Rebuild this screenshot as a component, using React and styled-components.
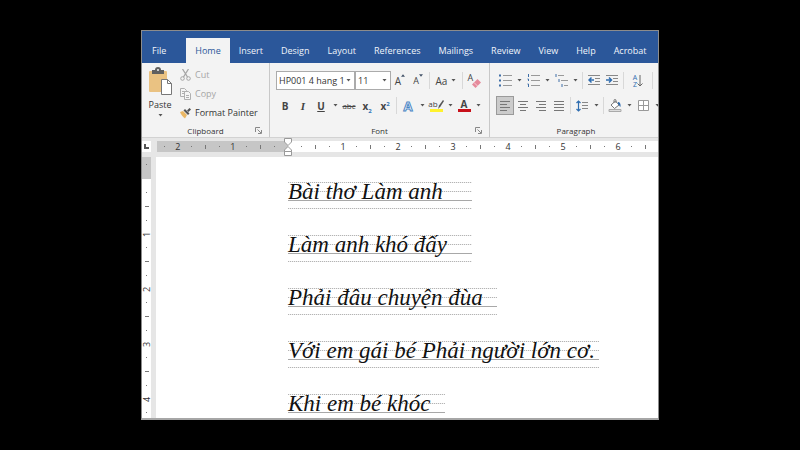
import React, { useState } from "react"
import styled, { createGlobalStyle, css } from "styled-components"

const GlobalStyle = createGlobalStyle`
  * {
    box-sizing: border-box;
  }
  body {
    margin: 0;
    background: #000;
    font-family: "Open Sans", "Noto Sans", sans-serif;
    font-size: 9px;
    color: #333;
  }
  button, select {
    font: inherit;
    color: inherit;
    margin: 0;
    padding: 0;
    border: 0;
    background: none;
  }
`

const Page = styled.div`
  height: 100vh;
  padding: 30px 141px;
  display: flex;
`
const Window = styled.main`
  flex: 1;
  min-width: 0;
  display: flex;
  flex-direction: column;
  overflow: hidden;
  background: #e6e6e6;
  border: 1px solid #8c8c8c;
  border-bottom: 2px solid #a6a6a6;
`

/* tabs */
const Tabs = styled.nav`
  flex: none;
  display: flex;
  align-items: flex-end;
  height: 32px;
  padding-left: 1px;
  background: #2b579a;
`
const Tab = styled.button`
  flex: none;
  height: 25px;
  padding: 0 9px;
  color: ${(prop) => (prop.$active ? "#2b579a" : "#f0f4fa")};
  background: ${(prop) => (prop.$active ? "#f3f3f3" : "transparent")};

  &:first-child {
    margin-right: 11px;
  }
`

/* ribbon */
const Ribbon = styled.section`
  flex: none;
  display: flex;
  height: 75px;
  background: #f3f3f3;
  border-bottom: 1px solid #d2d2d2;
`
const Group = styled.div`
  flex: none;
  width: ${(prop) => prop.$width}px;
  display: flex;
  flex-direction: column;
  padding: 2px 4px 0 6px;
  border-right: 1px solid #c8c8c8;
`
const GroupBody = styled.div`
  height: 58px;
  padding-top: 6px;
  display: flex;
  flex-direction: column;
  gap: 6px;
`
const GroupFooter = styled.div`
  display: grid;
  grid-template-columns: 10px 1fr 10px;
  align-items: center;
  height: 14px;
  margin-left: -2px;
  font-size: 8px;
  text-align: center;
`
const GroupName = styled.span`
  grid-column: 2;
`
const Row = styled.div`
  display: flex;
  align-items: center;
  height: 19px;
`
const Separator = styled.span`
  flex: none;
  width: 1px;
  height: 17px;
  margin: 0 2px;
  background: #d8d8d8;
`
const Tool = styled.button`
  flex: none;
  width: ${(prop) => prop.$width || 18}px;
  height: 19px;
  display: flex;
  align-items: center;
  justify-content: center;
  gap: 4px;

  ${(prop) =>
    prop.$active &&
    css`
      background: #cbcbcb;
      border: 1px solid #9a9a9a;
    `}
`
const ArrowButton = styled(Tool)`
  width: 10px;
`
const Letter = styled.span`
  font-size: ${(prop) => prop.$size || 10}px;
  font-weight: ${(prop) => (prop.$bold ? 700 : 400)};
  color: #444;

  sub,
  sup {
    font-size: 6px;
    line-height: 0;
    color: #2e75b6;
  }
`
const Italic = styled(Letter)`
  font-family: "Liberation Serif", serif;
  font-style: italic;
`
const Underlined = styled(Letter)`
  text-decoration: underline;
`
const Strike = styled(Letter)`
  text-decoration: line-through;
`

/* clipboard */
const Clipboard = styled.div`
  display: flex;
  height: 58px;
`
const PasteButton = styled.button`
  width: 24px;
  display: flex;
  flex-direction: column;
  align-items: center;
  justify-content: space-between;
  padding: 2px 0 6px;
`
const ClipboardList = styled.div`
  display: flex;
  flex-direction: column;
  margin-left: 8px;
`
const ClipboardItem = styled.button`
  display: flex;
  align-items: center;
  gap: 4px;
  height: 19px;
  color: #333;

  &:disabled {
    color: #a6a6a6;
  }
`

/* drop-downs */
const Field = styled.label`
  flex: none;
  display: grid;
  width: ${(prop) => prop.$width}px;
  align-items: center;

  & > * {
    grid-area: 1 / 1;
  }
  & > svg {
    justify-self: end;
    margin-right: 4px;
    pointer-events: none;
  }
`
const Select = styled.select`
  appearance: none;
  width: 100%;
  height: 19px;
  padding-left: 2px;
  background: #fff;
  border: 1px solid #ababab;
  border-radius: 0;
`

/* rulers */
const RulerBar = styled.div`
  flex: none;
  display: flex;
  height: 19px;
  padding: 3px 0 5px;
`
const Corner = styled.button`
  flex: none;
  width: 9px;
  height: 11px;
  margin-right: 6px;
  display: flex;
  align-items: center;
  justify-content: center;
  background: #fff;
`
const Track = styled.div`
  position: relative;
  display: flex;
  flex: ${(prop) => (prop.$margin ? "none" : 1)};
  width: ${(prop) => (prop.$margin ? "131px" : "auto")};
  min-width: 0;
  justify-content: ${(prop) => (prop.$margin ? "flex-end" : "flex-start")};
  padding: 0 7px;
  background: ${(prop) => (prop.$margin ? "#c6c6c6" : "#fff")};
`
const Clip = styled.div`
  flex: 1;
  min-width: 0;
  display: flex;
  justify-content: inherit;
  overflow: hidden;
`
const Inch = styled.div`
  flex: none;
  width: 55px;
  display: grid;
  grid-template-columns: repeat(4, 1fr);
  place-items: center;
  font-size: 9px;
  line-height: 11px;
`
const Dot = styled.i`
  width: 1px;
  height: 1px;
  background: #777;
`
const Tick = styled.i`
  width: 1px;
  height: 4px;
  background: #777;
`
const IndentMarker = styled.svg`
  position: absolute;
  left: -4px;
  top: -3px;
`
const Body = styled.div`
  flex: 1;
  min-height: 0;
  display: flex;
`
const SideRuler = styled.div`
  flex: none;
  width: 9px;
  margin-right: 5px;
  overflow: hidden;
  background: #fff;
`
const SideMargin = styled.div`
  height: 22px;
  padding-top: 7px;
  margin-bottom: 7px;
  display: flex;
  justify-content: center;
  background: #c6c6c6;
`
const SideInch = styled.div`
  height: 55px;
  display: grid;
  grid-template-rows: repeat(4, 1fr);
  place-items: center;
  font-size: 9px;
  line-height: 9px;
`
const SideTick = styled(Tick)`
  width: 4px;
  height: 1px;
`
const SideNumber = styled.span`
  transform: rotate(-90deg);
`

/* document */
const Sheet = styled.article`
  flex: 1;
  min-width: 0;
  overflow: hidden;
  display: flex;
  flex-direction: column;
  align-items: flex-start;
  gap: 26px;
  padding: 25px 0 0 132px;
  background: #fff;
`
const dotted = "repeating-linear-gradient(90deg, #b4b4b4 0 1px, #eee 1px 2px)"
const Verse = styled.p`
  flex: none;
  margin: 0;
  height: 27px;
  width: ${(prop) => prop.$width}px;
  font-family: "Liberation Serif", serif;
  font-size: 23px;
  font-style: italic;
  line-height: 20px;
  white-space: nowrap;
  color: #111;
  background:
    ${dotted} 0 0 / 100% 1px no-repeat,
    ${dotted} 0 9px / 100% 1px no-repeat,
    linear-gradient(#a8a8a8, #a8a8a8) 0 18px / 100% 1px no-repeat,
    ${dotted} 0 26px / 100% 1px no-repeat;
`

const tabs = [
  "File",
  "Home",
  "Insert",
  "Design",
  "Layout",
  "References",
  "Mailings",
  "Review",
  "View",
  "Help",
  "Acrobat",
]

const verses = [
  { text: "Bài thơ Làm anh", width: 184 },
  { text: "Làm anh khó đấy", width: 184 },
  { text: "Phải đâu chuyện đùa", width: 209 },
  { text: "Với em gái bé Phải người lớn cơ.", width: 311 },
  { text: "Khi em bé khóc", width: 157 },
]

const Caret = () => (
  <svg width="5" height="3" viewBox="0 0 5 3">
    <path d="M.5 0h4l-2 2.500z" fill="#555" />
  </svg>
)

const Arrow = ({ label }) => (
  <ArrowButton aria-label={label}>
    <Caret />
  </ArrowButton>
)

const Launcher = () => (
  <svg width="7" height="7" viewBox="0 0 7 7" fill="none" stroke="#888">
    <path d="M.5 5V.5H5M2.500 2.500l3.500 3.500M6.500 3v3.500H3" />
  </svg>
)

const PasteIcon = () => (
  <svg width="25" height="28" viewBox="0 0 25 28">
    <rect x="1" y="4" width="18" height="21" rx="1" fill="#eac282" />
    <path d="M4 3h3a3 3 0 0 1 6 0h3v4H4z" fill="#606060" />
    <circle cx="10" cy="3" r="1" fill="#f3f3f3" />
    <path d="M13.500 12.500h6l4 4v11h-10z" fill="#fff" stroke="#777" />
    <path d="M19.500 12.500v4h4" fill="none" stroke="#777" />
  </svg>
)

const CutIcon = () => (
  <svg width="11" height="12" viewBox="0 0 11 12" fill="none" stroke="#a6a6a6">
    <path d="M2.500 0l5 8M8.500 0l-5 8" strokeWidth="1.300" />
    <circle cx="2.500" cy="9.500" r="1.800" />
    <circle cx="8.500" cy="9.500" r="1.800" />
  </svg>
)

const CopyIcon = () => (
  <svg width="11" height="12" viewBox="0 0 11 12" fill="#f6f6f6" stroke="#b0b0b0">
    <path d="M.5.5h4l2 2v6h-6zM2 3.500h3M2 5.500h3" />
    <path d="M4.500 3.500h4l2 2v6h-6zM6 7.500h3M6 9.500h3" />
  </svg>
)

const BrushIcon = () => (
  <svg width="11" height="12" viewBox="0 0 11 12">
    <path d="M0 5l3-1 4 4-2 3.500C3 10 1 8 0 5z" fill="#eab765" />
    <path d="M3.500 3.500l1.500-1.500 4.500 4.500L8 8z" fill="#555" />
    <path d="M7 3.500L9.500 1 11 2.500 8.500 5z" fill="#555" />
  </svg>
)

const FontSizeIcon = ({ up }) => (
  <svg width="4" height="3" viewBox="0 0 5 3">
    <path d={up ? "M0 3h5L2.500 0z" : "M0 0h5L2.500 3z"} fill="#44546a" />
  </svg>
)

const Superscripted = styled.span`
  display: flex;
  align-items: flex-start;
`

const EraserIcon = () => (
  <svg width="9" height="9" viewBox="0 0 9 9">
    <path d="M0 5.500L5.500 0 9 3.500 3.500 9z" fill="#e58a9b" />
    <path d="M2 3.500L5.500 7" stroke="#f6cdd5" />
  </svg>
)

const EraserStack = styled.span`
  display: grid;
  grid-template-columns: 4px 9px;
  align-items: end;
  height: 14px;
  line-height: 8px;

  & > span {
    align-self: start;
  }
`

const ColorStack = styled.span`
  display: flex;
  flex-direction: column;
  align-items: center;
  width: 13px;
  line-height: 10px;
  border-bottom: 3px solid ${(prop) => prop.$color};
`

const HighlightMark = styled.span`
  display: flex;
  align-items: center;
`

const PenIcon = () => (
  <svg width="6" height="9" viewBox="0 0 6 9">
    <path d="M0 9l1-3.500L5 0l1 1-3.500 5.500z" fill="#555" />
  </svg>
)

const TextEffect = styled.span`
  font-size: 13px;
  font-weight: 700;
  line-height: 14px;
  color: #fff;
  -webkit-text-stroke: 1px #4a86c5;
`

const ListIcon = ({ kind }) => (
  <svg width="13" height="13" viewBox="0 0 13 13" fill="none">
    {kind === "bullets" && (
      <>
        <path d="M0 1.500h2M0 6.500h2M0 11.500h2" stroke="#3f6fa8" strokeWidth="2" />
        <path d="M4 1.500h9M4 6.500h9M4 11.500h9" stroke="#999" />
      </>
    )}
    {kind === "numbers" && (
      <>
        <path d="M1.500 0v3M.5 5h1v2M.5 10h1v3" stroke="#3f6fa8" />
        <path d="M4 1.500h9M4 6.500h9M4 11.500h9" stroke="#999" />
      </>
    )}
    {kind === "levels" && (
      <>
        <path d="M1 0v3M4 5v3M7 10v3" stroke="#3f6fa8" />
        <path d="M3 1.500h6M6 6.500h7M9 11.500h4" stroke="#999" />
      </>
    )}
  </svg>
)

const IndentIcon = ({ right }) => (
  <svg width="12" height="11" viewBox="0 0 12 11" fill="none">
    <path d="M0 .5h12M7 3.500h5M7 6.500h5M0 9.500h12" stroke="#888" />
    <path
      d={right ? "M0 5h5M3 2.500L5.500 5 3 7.500" : "M6 5H1M3.500 2.500L1 5l2.500 2.500"}
      stroke="#2f6db0"
      strokeWidth="1.500"
    />
  </svg>
)

const SortMark = styled.span`
  display: flex;
  align-items: center;
  font-size: 7px;
  line-height: 7px;
  color: #2f6db0;
`
const SortLetters = styled.span`
  display: flex;
  flex-direction: column;
`

const DownIcon = () => (
  <svg width="6" height="12" viewBox="0 0 6 12" fill="none" stroke="#666">
    <path d="M3 0v11M.5 8.500L3 11l2.500-2.500" />
  </svg>
)

const alignPaths = {
  left: "M0 .5h10M0 3.500h7M0 6.500h10M0 9.500h7",
  center: "M0 .5h10M2 3.500h6M0 6.500h10M2 9.500h6",
  right: "M0 .5h10M3 3.500h7M0 6.500h10M3 9.500h7",
  justify: "M0 .5h10M0 3.500h10M0 6.500h10M0 9.500h10",
}

const AlignIcon = ({ align }) => (
  <svg width="10" height="10" viewBox="0 0 10 10" stroke="#777">
    <path d={alignPaths[align]} />
  </svg>
)

const SpacingIcon = () => (
  <svg width="12" height="12" viewBox="0 0 12 12" fill="none">
    <path d="M2.500 1v10M.5 3l2-2 2 2M.5 9l2 2 2-2" stroke="#2f6db0" strokeWidth="1.200" />
    <path d="M6 2.500h6M6 5.500h6M6 8.500h6" stroke="#888" />
  </svg>
)

const BucketIcon = () => (
  <svg width="14" height="13" viewBox="0 0 14 13" fill="none">
    <path d="M3 6l4.500-4L11 6 6.500 9.500z" fill="#fff" stroke="#777" />
    <path d="M6 4V1.500a1 1 0 0 1 2 0V4" stroke="#777" />
    <path d="M10 3c2 0 3 2 2.500 5-1.500-1-1-2-2.500-3z" fill="#2f6db0" />
    <path d="M1 10.500h12v2H1z" fill="#ddd" stroke="#aaa" />
  </svg>
)

const BordersIcon = () => (
  <svg width="11" height="11" viewBox="0 0 11 11" fill="#fff" stroke="#999">
    <path d="M.5.5h10v10H.5zM5.500.5v10M.5 5.500h10" />
  </svg>
)

const App = () => {
  const [activeTab, setActiveTab] = useState("Home")
  const [align, setAlign] = useState("left")

  return (
    <>
      <GlobalStyle />
      <Page>
        <Window>
          <Tabs>
            {tabs.map((name) => (
              <Tab
                key={name}
                $active={activeTab === name}
                onClick={() => setActiveTab(name)}
              >
                {name}
              </Tab>
            ))}
          </Tabs>

          <Ribbon>
            <Group $width={128}>
              <Clipboard>
                <PasteButton>
                  <PasteIcon />
                  Paste
                  <Caret />
                </PasteButton>
                <ClipboardList>
                  <ClipboardItem disabled>
                    <CutIcon />
                    Cut
                  </ClipboardItem>
                  <ClipboardItem disabled>
                    <CopyIcon />
                    Copy
                  </ClipboardItem>
                  <ClipboardItem>
                    <BrushIcon />
                    Format Painter
                  </ClipboardItem>
                </ClipboardList>
              </Clipboard>
              <GroupFooter>
                <GroupName>Clipboard</GroupName>
                <Launcher />
              </GroupFooter>
            </Group>

            <Group $width={220}>
              <GroupBody>
                <Row>
                  <Field $width={79}>
                    <Select aria-label="Font name">
                      <option>HP001 4 hang 1</option>
                    </Select>
                    <Caret />
                  </Field>
                  <Field $width={36}>
                    <Select aria-label="Font size">
                      <option>11</option>
                    </Select>
                    <Caret />
                  </Field>
                  <Tool aria-label="Increase font size">
                    <Superscripted>
                      <Letter>A</Letter>
                      <FontSizeIcon up />
                    </Superscripted>
                  </Tool>
                  <Tool aria-label="Decrease font size">
                    <Superscripted>
                      <Letter $size={9}>A</Letter>
                      <FontSizeIcon />
                    </Superscripted>
                  </Tool>
                  <Separator />
                  <Tool $width={28} aria-label="Change case">
                    <Letter>Aa</Letter>
                    <Caret />
                  </Tool>
                  <Separator />
                  <Tool aria-label="Clear formatting">
                    <EraserStack>
                      <Letter $size={9}>A</Letter>
                      <EraserIcon />
                    </EraserStack>
                  </Tool>
                </Row>
                <Row>
                  <Tool aria-label="Bold">
                    <Letter $bold>B</Letter>
                  </Tool>
                  <Tool aria-label="Italic">
                    <Italic $bold $size={11}>I</Italic>
                  </Tool>
                  <Tool aria-label="Underline">
                    <Underlined $bold>U</Underlined>
                  </Tool>
                  <Arrow label="Underline style" />
                  <Tool aria-label="Strikethrough">
                    <Strike $size={8}>abc</Strike>
                  </Tool>
                  <Tool aria-label="Subscript">
                    <Letter $bold>
                      x<sub>2</sub>
                    </Letter>
                  </Tool>
                  <Tool aria-label="Superscript">
                    <Letter $bold>
                      x<sup>2</sup>
                    </Letter>
                  </Tool>
                  <Separator />
                  <Tool aria-label="Text effects">
                    <TextEffect>A</TextEffect>
                  </Tool>
                  <Arrow label="More text effects" />
                  <Tool aria-label="Highlight">
                    <ColorStack $color="#fff22d">
                      <HighlightMark>
                        <Letter $size={8}>ab</Letter>
                        <PenIcon />
                      </HighlightMark>
                    </ColorStack>
                  </Tool>
                  <Arrow label="Highlight colour" />
                  <Tool aria-label="Font colour">
                    <ColorStack $color="#c8101a">
                      <Letter $bold>A</Letter>
                    </ColorStack>
                  </Tool>
                  <Arrow label="More font colours" />
                </Row>
              </GroupBody>
              <GroupFooter>
                <GroupName>Font</GroupName>
                <Launcher />
              </GroupFooter>
            </Group>

            <Group $width={173}>
              <GroupBody>
                <Row>
                  <Tool aria-label="Bullets">
                    <ListIcon kind="bullets" />
                  </Tool>
                  <Arrow label="Bullet style" />
                  <Tool aria-label="Numbering">
                    <ListIcon kind="numbers" />
                  </Tool>
                  <Arrow label="Number style" />
                  <Tool aria-label="Multilevel list">
                    <ListIcon kind="levels" />
                  </Tool>
                  <Arrow label="List style" />
                  <Separator />
                  <Tool aria-label="Decrease indent">
                    <IndentIcon />
                  </Tool>
                  <Tool aria-label="Increase indent">
                    <IndentIcon right />
                  </Tool>
                  <Separator />
                  <Tool $width={24} aria-label="Sort">
                    <SortMark>
                      <SortLetters>
                        <span>A</span>
                        <span>Z</span>
                      </SortLetters>
                      <DownIcon />
                    </SortMark>
                  </Tool>
                  <Separator />
                  <Tool aria-label="Show marks">
                    <Letter>¶</Letter>
                  </Tool>
                </Row>
                <Row>
                  {Object.keys(alignPaths).map((item) => (
                    <Tool
                      key={item}
                      aria-label={item}
                      $active={align === item}
                      onClick={() => setAlign(item)}
                    >
                      <AlignIcon align={item} />
                    </Tool>
                  ))}
                  <Separator />
                  <Tool aria-label="Line spacing">
                    <SpacingIcon />
                  </Tool>
                  <Arrow label="More line spacing" />
                  <Separator />
                  <Tool aria-label="Shading">
                    <BucketIcon />
                  </Tool>
                  <Arrow label="Shading colour" />
                  <Tool aria-label="Borders">
                    <BordersIcon />
                  </Tool>
                  <Arrow label="Border style" />
                </Row>
              </GroupBody>
              <GroupFooter>
                <GroupName>Paragraph</GroupName>
              </GroupFooter>
            </Group>
          </Ribbon>

          <RulerBar>
            <Corner aria-label="Tab stop">
              <svg width="5" height="5" viewBox="0 0 5 5">
                <path d="M1 0v4h4" fill="none" stroke="#555" strokeWidth="2" />
              </svg>
            </Corner>
            <Track $margin>
              <Clip>
                {["", 2, 1].map((n) => (
                  <Inch key={n}>
                    <span>{n}</span>
                    <Dot />
                    <Tick />
                    <Dot />
                  </Inch>
                ))}
              </Clip>
            </Track>
            <Track>
              <IndentMarker width="8" height="18" viewBox="0 0 8 18" fill="#fff" stroke="#999">
                <path d="M.5.5h7V4L4 7.500.5 4zM4 8.500L7.500 12v1.500h-7V12zM.5 13.500h7v4h-7z" />
              </IndentMarker>
              <Clip>
                {[1, 2, 3, 4, 5, 6, ""].map((n) => (
                  <Inch key={n}>
                    <Dot />
                    <Tick />
                    <Dot />
                    <span>{n}</span>
                  </Inch>
                ))}
              </Clip>
            </Track>
          </RulerBar>

          <Body>
            <SideRuler>
              <SideMargin>
                <Dot />
              </SideMargin>
              {[1, 2, 3, 4, ""].map((n) => (
                <SideInch key={n}>
                  <Dot />
                  <SideTick />
                  <Dot />
                  <SideNumber>{n}</SideNumber>
                </SideInch>
              ))}
            </SideRuler>
            <Sheet>
              {verses.map((item) => (
                <Verse key={item.text} $width={item.width}>
                  {item.text}
                </Verse>
              ))}
            </Sheet>
          </Body>
        </Window>
      </Page>
    </>
  )
}

export default App
